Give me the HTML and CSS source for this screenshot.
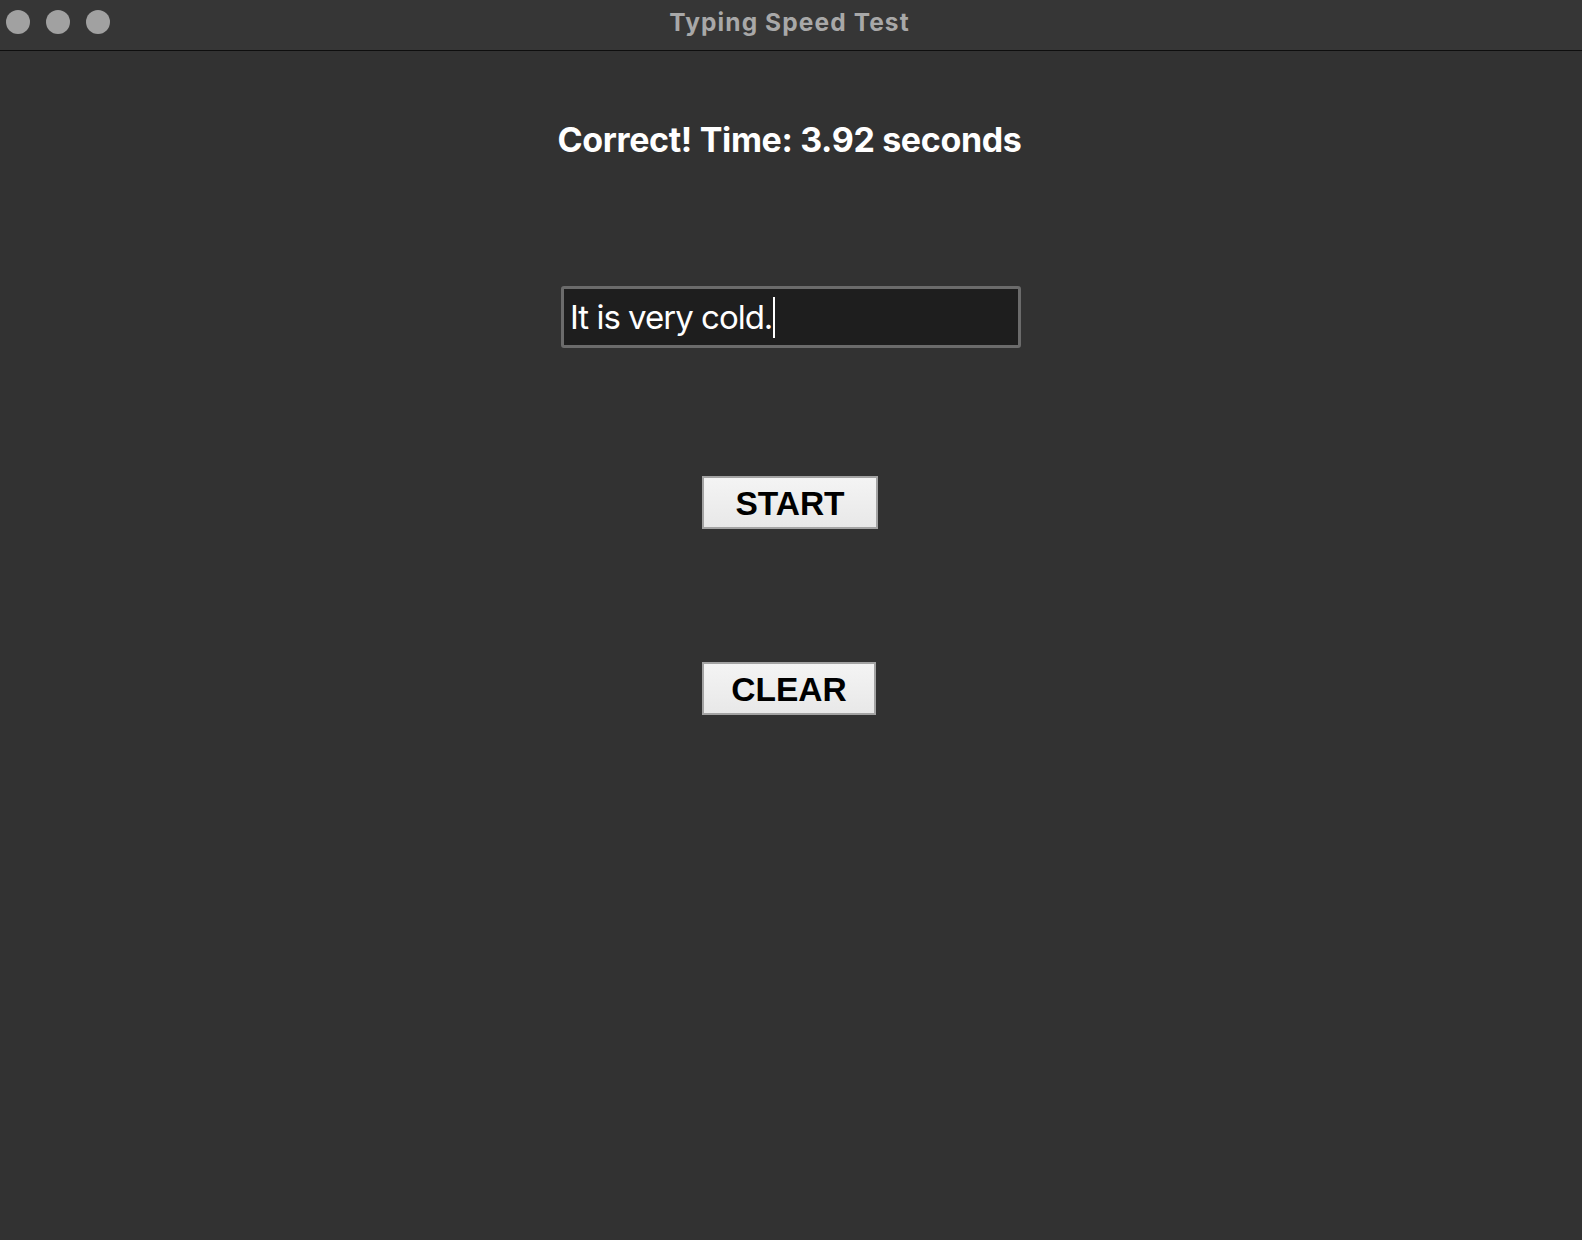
FILE: index.html
```html
<!DOCTYPE html>
<html>
<head>
<meta charset="utf-8">
<title>Typing Speed Test</title>
<link rel="stylesheet" href="styles.css">
</head>
<body>
<div class="window">
  <header class="titlebar">
    <div class="lights">
      <span class="light"></span>
      <span class="light"></span>
      <span class="light"></span>
    </div>
    <div class="title">Typing Speed Test</div>
  </header>
  <main class="content">
    <h1 class="result">Correct! Time: 3.92 seconds</h1>
    <div class="entry"><span class="entry-text">It is very cold.</span><span class="caret"></span></div>
    <button class="btn btn-start">START</button>
    <button class="btn btn-clear">CLEAR</button>
  </main>
</div>
</body>
</html>
```

FILE: styles.css
```css
html, body {
  margin: 0;
  padding: 0;
  background: #323232;
}

.window {
  width: 1582px;
  height: 1240px;
  display: flex;
  flex-direction: column;
  background: #323232;
  font-family: Inter, "Liberation Sans", sans-serif;
}

.titlebar {
  position: relative;
  height: 50px;
  background: #363636;
  border-bottom: 1px solid #0e0e0e;
  display: flex;
  align-items: center;
  justify-content: center;
  flex-shrink: 0;
}

.lights {
  position: absolute;
  left: 6px;
  top: 10px;
  display: flex;
  gap: 16px;
}

.light {
  width: 24px;
  height: 24px;
  border-radius: 50%;
  background: #a1a1a1;
}

.title {
  font-size: 24.5px;
  font-weight: 700;
  color: #a8a8a8;
  letter-spacing: 1.1px;
  margin-top: -7px;
  margin-right: 3px;
}

.content {
  display: flex;
  flex-direction: column;
  align-items: center;
}

.result {
  margin: 72px 3px 0 0;
  font-size: 34px;
  line-height: 1;
  font-weight: 700;
  color: #ffffff;
  letter-spacing: -0.35px;
}

.entry {
  margin-top: 129px;
  height: 56px;
  border: 3px solid #6b6b6b;
  border-radius: 3px;
  background: #1e1e1e;
  display: flex;
  align-items: center;
  padding-left: 6px;
  box-sizing: content-box;
  width: 448px;
  font-size: 33px;
  color: #ffffff;
  letter-spacing: -1px;
}

.caret {
  width: 2px;
  height: 41px;
  background: #ffffff;
  margin-left: 1px;
}

.btn {
  width: 176px;
  height: 53px;
  border: 2px solid #a3a3a3;
  border-radius: 0;
  background: linear-gradient(#f4f4f4, #e8e8e8);
  font-family: "Liberation Sans", Arial, sans-serif;
  font-size: 33.5px;
  font-weight: 700;
  color: #000000;
  padding: 3px 0 0 0;
  box-sizing: border-box;
  display: flex;
  align-items: center;
  justify-content: center;
}

.btn-start {
  margin-top: 128px;
  margin-right: 2px;
}

.btn-clear {
  margin-top: 133px;
  width: 174px;
  margin-right: 4px;
}
```
